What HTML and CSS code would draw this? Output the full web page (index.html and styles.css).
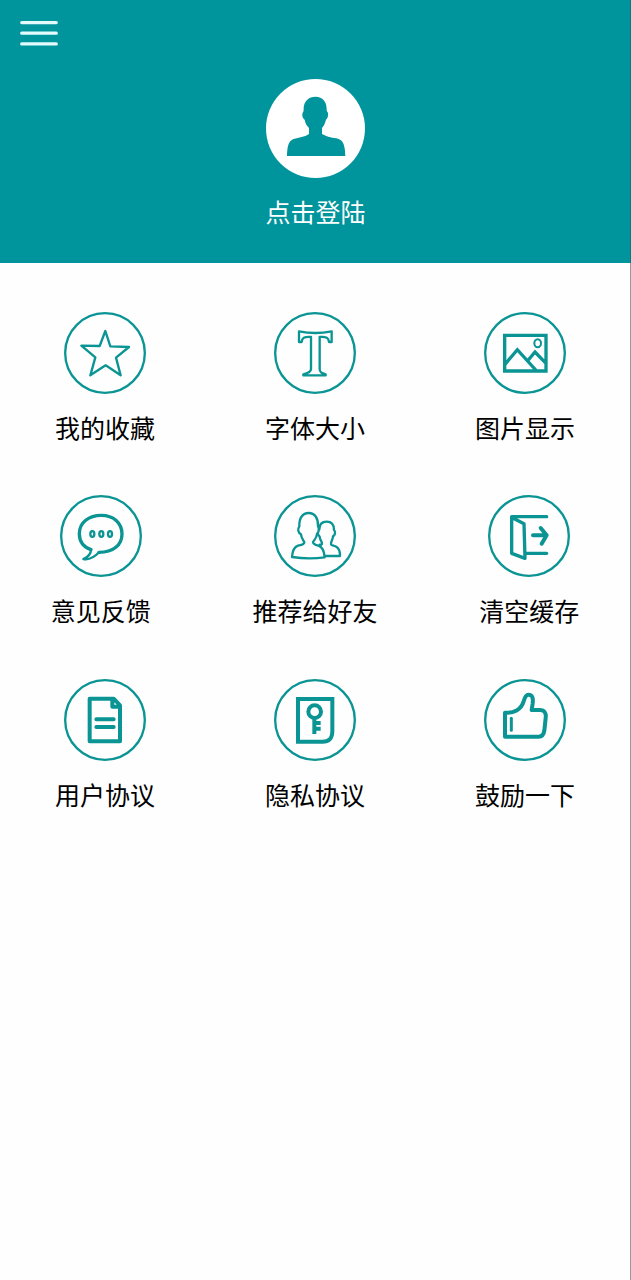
FILE: index.html
```html
<!DOCTYPE html>
<html lang="zh-CN">
<head>
<meta charset="utf-8">
<title>我的</title>
<link rel="stylesheet" href="styles.css">
</head>
<body>
<div class="screen">
  <header class="header">
    <svg class="menu-icon" viewBox="0 0 38 26"><path d="M1.7 1.6H36.3M1.7 12.2H36.3M1.7 22.9H36.3"/></svg>
    <div class="profile">
      <svg class="avatar" viewBox="47 27 297 297">
        <circle cx="195.500" cy="175.500" r="148.500"/>
        <path d="M196 80C217 80 229 95 229 117C229 122 229 124 232 127C235 133 233 145 227 149C224 160 221 167 215 174V192C232 202 249 203 263 206C282 211 284 233 285 258H110C111 232 113 213 130 207C146 202 162 202 176 192V174C169 167 165 160 163 149C156 145 154 133 158 127C160 124 160 121 160 115C160 94 175 80 196 80Z"/>
      </svg>
      <span class="login">点击登陆</span>
    </div>
  </header>
  <main class="menu">
    <div class="row">
      <div class="item">
        <svg class="icon thin" viewBox="42 36 246 246"><circle class="ring" cx="165" cy="159" r="119.500"/>
          <path d="M166 93L181 139L237 141L198 173L212 226L167 196L121 226L136 172L94 137L149 138Z"/></svg>
        <span class="label">我的收藏</span>
      </div>
      <div class="item">
        <svg class="icon thin" viewBox="42 36 246 246"><circle class="ring" cx="165" cy="159" r="119.500"/>
          <path d="M117 94Q166 104 215 94V126H207C206 113 200 110 179 111V207C179 216 184 219 197 223V226H130V223C145 219 153 216 153 207V111C132 110 126 113 125 126H117Z"/></svg>
        <span class="label">字体大小</span>
      </div>
      <div class="item">
        <svg class="icon sharp" viewBox="43 36 246 246"><circle class="ring" cx="166" cy="159" r="119.500"/>
          <path d="M105 106H229V213H105ZM106 193L143 149L201 213M176 180L196 156L229 190"/><ellipse class="fine" cx="204" cy="130" rx="10" ry="12"/></svg>
        <span class="label">图片显示</span>
      </div>
    </div>
    <div class="row">
      <div class="item">
        <svg class="icon" viewBox="45 30 246 246"><circle class="ring" cx="168" cy="153" r="119.500"/>
          <path d="M138 194C114 185 103 169 103 146C103 112 132 91 169 91C205 91 231 113 231 147C231 180 205 202 162 202"/>
          <path class="tail" d="M138 194C138 206 130 215 115 222C136 226 150 215 162 202"/>
          <g class="dots"><ellipse cx="142" cy="147" rx="6" ry="8.500"/><ellipse cx="169" cy="147" rx="6" ry="8.500"/><ellipse cx="195" cy="147" rx="6" ry="8.500"/></g></svg>
        <span class="label">意见反馈</span>
      </div>
      <div class="item">
        <svg class="icon thin" viewBox="87 30 246 246"><circle class="ring" cx="210" cy="153" r="119.500"/>
          <path d="M191 84C209 84 220 99 219 123C223 129 222 142 216 147C215 160 208 164 204 171C204 178 212 180 220 182C235 187 238 201 239 217Q191 224 141 216C142 201 145 187 159 182C168 179 177 180 178 172C175 164 169 160 168 148C159 143 157 132 163 124C162 99 173 84 191 84Z"/>
          <path d="M223 133C223 119 231 110 245 110C260 110 267 120 267 135C273 141 270 151 264 154C264 165 257 169 258 178C260 183 267 181 275 186C283 191 285 202 285 213H240M224 179C233 181 232 174 228 167C225 164 225 160 224 155L219 148"/></svg>
        <span class="label">推荐给好友</span>
      </div>
      <div class="item">
        <svg class="icon" viewBox="55 30 246 246"><circle class="ring" cx="178" cy="153" r="119.500"/>
          <path d="M231 95H126V205L166 220L163 116L128 98M166 205H231"/><path class="bold" d="M190 151H231M213 129L231 151L216 176"/></svg>
        <span class="label">清空缓存</span>
      </div>
    </div>
    <div class="row">
      <div class="item">
        <svg class="icon bold" viewBox="42 26 246 246"><circle class="ring" cx="165" cy="149" r="119.500"/>
          <path d="M119 85H191L210 105V213H119ZM187 87V109H210M139 147H191M139 170H191"/></svg>
        <span class="label">用户协议</span>
      </div>
      <div class="item">
        <svg class="icon bold sharp" viewBox="42 26 246 246"><circle class="ring" cx="165" cy="149" r="119.500"/>
          <path d="M114 86H217V181C217 204 208 214 187 214H114Z"/><circle cx="164" cy="124" r="19"/><path class="key" d="M163 143V191M163 158H182M163 175H182"/></svg>
        <span class="label">隐私协议</span>
      </div>
      <div class="item">
        <svg class="icon bold" viewBox="43 26 246 246"><circle class="ring" cx="166" cy="149" r="119.500"/>
          <path d="M106 199V127C131 129 155 119 162 93C165 81 168 73 177 73C188 73 191 83 189 99L186 119H210C225 119 230 129 228 143L224 181C222 194 217 199 207 199Z"/><path class="cuff" d="M125 144V180"/></svg>
        <span class="label">鼓励一下</span>
      </div>
    </div>
  </main>
</div>
</body>
</html>
```
FILE: styles.css
```css
* { box-sizing: border-box; }

body {
  margin: 0;
  background: #fefefe;
  font-family: "Noto Sans CJK SC", sans-serif;
  font-size: 25px;
  color: #000;
}

.screen {
  width: 631px;
  height: 1280px;
  border-right: 1px solid #999;
}

.header {
  display: flex;
  flex-direction: column;
  height: 263px;
  margin-right: -1px;
  padding-top: 21px;
  background: #00959d;
  box-shadow: inset -1px 0 #087b82;
}

.menu-icon {
  width: 38px;
  height: 26px;
  margin-left: 20px;
  fill: none;
  stroke: #e2fbfc;
  stroke-width: 3.2;
  stroke-linecap: round;
}

.profile {
  display: flex;
  flex-direction: column;
  align-items: center;
  margin-top: 32px;
}

.avatar {
  width: 99px;
  height: 99px;
  fill: #00959d;
}

.avatar circle { fill: #fff; }

.login {
  margin-top: 15px;
  line-height: 37px;
  color: #fff;
}

.menu {
  display: flex;
  flex-direction: column;
  gap: 49.4px;
  padding-top: 49px;
}

.row {
  display: flex;
  justify-content: space-around;
}

.item {
  display: flex;
  flex-direction: column;
  align-items: center;
}

.icon {
  width: 82px;
  height: 82px;
  fill: none;
  stroke: #0b9494;
  stroke-width: 10;
  stroke-linecap: round;
  stroke-linejoin: round;
}

.thin { stroke-width: 7; }
.bold { stroke-width: 12; }
.sharp { stroke-linejoin: miter; }
.fine { stroke-width: 6; }
.tail,
.dots { stroke-width: 7; }
.cuff { stroke-width: 9; }
.key { stroke-linecap: butt; }
.icon .ring { stroke-width: 7; }

.label {
  margin-top: 15px;
  line-height: 37px;
}
```
